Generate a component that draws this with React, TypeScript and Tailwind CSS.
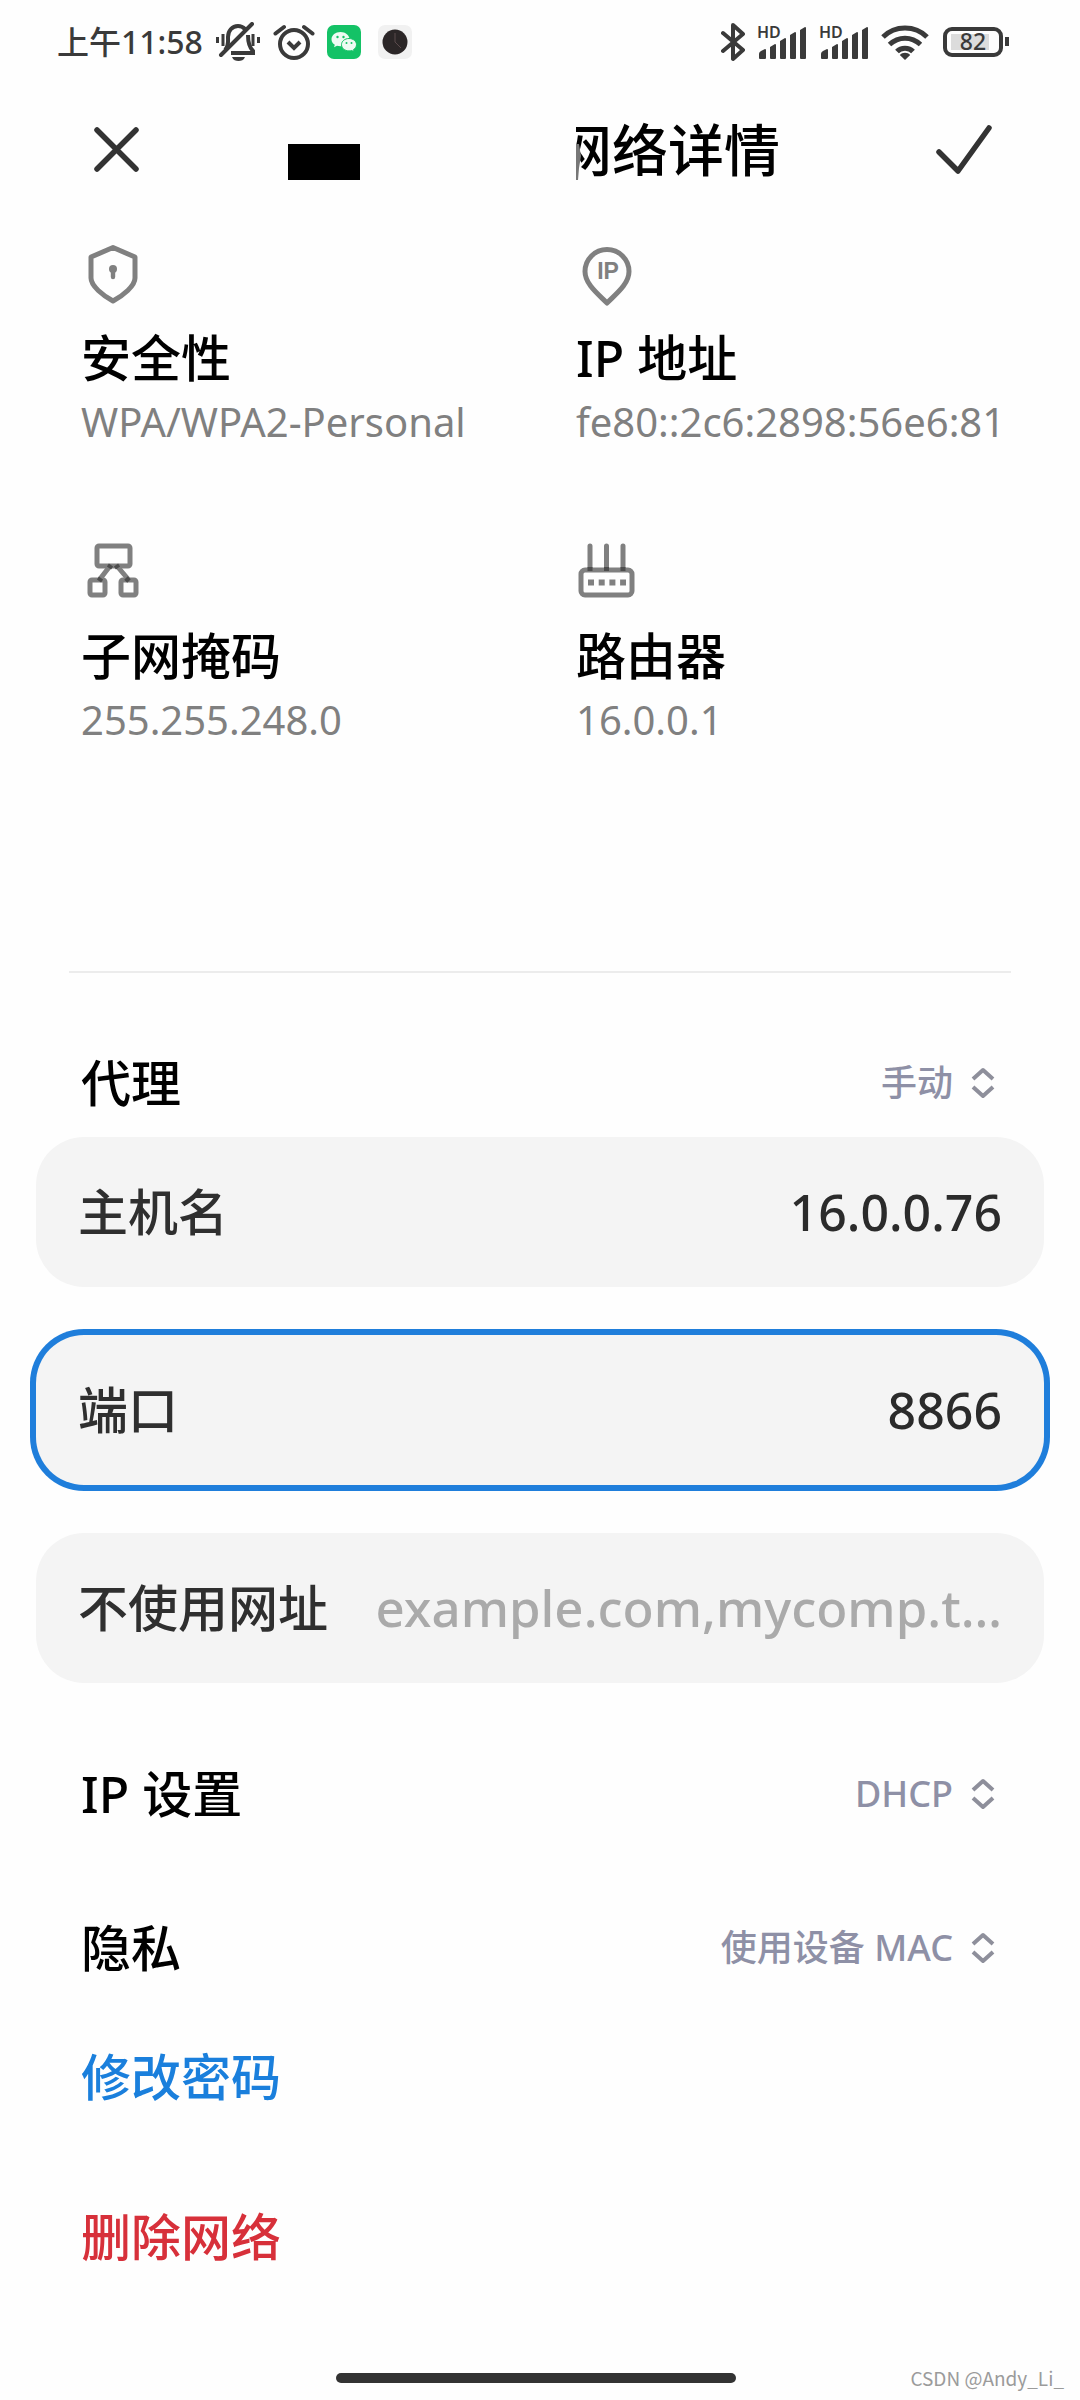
import type { ReactNode } from 'react';

function BellOff() {
  return (
    <svg width="46" height="40" viewBox="0 0 46 40" fill="none" stroke="#3a3a3a" strokeWidth="4">
      <path d="M10 28c4-4 3-8 3-13 0-6 4-11 10-11 3 0 5 1 7 3" />
      <path d="M33 13c0 8 1 12 5 16v2H16" />
      <path d="M37 2 6 33" strokeLinecap="round" />
      <path d="M17 35h13c-1 3-4 4-6.500 4S18 38 17 35z" fill="#3a3a3a" stroke="none" />
      <path d="M8 12v12M38 12v12" strokeWidth="3" />
      <path d="M2.500 15v6M43.500 15v6" strokeWidth="3" />
    </svg>
  );
}

function Alarm() {
  return (
    <svg width="42" height="40" viewBox="0 0 42 40" fill="none" stroke="#3a3a3a" strokeWidth="4">
      <circle cx="21" cy="22" r="14" />
      <path d="M2.500 11.500 11 5M39.500 11.500 31 5" strokeLinecap="round" />
      <path d="m15 20 6 6 6-6" />
    </svg>
  );
}

function WeChat() {
  return (
    <svg width="34" height="34" viewBox="0 0 34 34">
      <rect width="34" height="34" rx="7" fill="#14c266" />
      <path d="M13.500 7C8.500 7 4.500 10.200 4.500 14.200c0 2.300 1.300 4.200 3.300 5.500l-.8 2.600 3-1.500c1.100.3 2.300.5 3.500.5 5 0 9-3.200 9-7.100S18.500 7 13.500 7z" fill="#eefbf3" />
      <path d="M22 13.500c-4.200 0-7.500 2.700-7.500 6.200s3.300 6.200 7.500 6.200c1 0 1.900-.1 2.700-.4l2.500 1.300-.7-2.200c1.800-1.200 3-2.900 3-4.900 0-3.500-3.300-6.200-7.500-6.200z" fill="#eefbf3" stroke="#14c266" />
      <g fill="#14c266">
        <circle cx="10.500" cy="12" r="1.200" />
        <circle cx="16.500" cy="12" r="1.200" />
        <circle cx="19.500" cy="18" r="1" />
        <circle cx="24.500" cy="18" r="1" />
      </g>
    </svg>
  );
}

function ClockApp() {
  return (
    <svg width="40" height="34" viewBox="0 0 40 34">
      <rect x="5" width="34" height="34" rx="7" fill="#f1f1f1" />
      <circle cx="22" cy="17" r="12.500" fill="#2b2627" />
      <path d="M22 8v9l6 6" fill="none" stroke="#5b4a4c" />
    </svg>
  );
}

function Bluetooth() {
  return (
    <svg width="24" height="40" viewBox="1 0 24 40" fill="none" stroke="#3a3a3a" strokeWidth="4" strokeLinejoin="round" strokeLinecap="round">
      <path d="m3 11 20 17-10 9V3l10 9L3 29" />
    </svg>
  );
}

function Signal() {
  return (
    <svg width="50" height="50" viewBox="0 -8 50 50" fill="#3a3a3a">
      <text x="0" y="13" fontSize="16" fontWeight="600" fontFamily="Noto Sans, sans-serif">HD</text>
      <path d="M2 33v-4q0-2 2-3l4-2q1 0 1 1v8q0 1-1 1H3q-1 0-1-1zM13 33V22l5-3q1 0 1 1v13q0 1-1 1h-4q-1 0-1-1zM23 33V16l5-3q1 0 1 1v19q0 1-1 1h-4q-1 0-1-1zM33 33V10l5-3q1 0 1 1v25q0 1-1 1h-4q-1 0-1-1zM43 33V5l5-3q1 0 1 1v30q0 1-1 1h-4q-1 0-1-1z" />
    </svg>
  );
}

function Wifi() {
  return (
    <svg width="50" height="36" viewBox="0 0 50 36" fill="none" stroke="#3a3a3a" strokeWidth="5">
      <path d="M2 13C14 1 34 1 46 13" />
      <path d="M8.500 20.500c9-8.500 22-8.500 31 0" />
      <path d="M16 27.500c4-4.500 12-4.500 16 0" />
      <path d="M24 36 18.800 31c2.500-3 7.900-3 10.400 0z" fill="#3a3a3a" stroke="none" />
    </svg>
  );
}

function Battery() {
  return (
    <svg width="68" height="32" viewBox="0 0 68 32">
      <rect x="8" y="8" width="38" height="16" fill="#dcdcdc" />
      <rect x="2" y="3" width="56" height="26" rx="7" fill="none" stroke="#3a3a3a" strokeWidth="4" />
      <path d="M64 11v9" stroke="#3a3a3a" strokeWidth="4" />
      <text x="30" y="24" textAnchor="middle" fontSize="23" fontWeight="500" fill="#3a3a3a" fontFamily="Noto Sans, sans-serif">82</text>
    </svg>
  );
}

function Shield() {
  return (
    <svg width="64" height="64" viewBox="0 0 64 64" fill="none" stroke="#808080" strokeWidth="5" strokeLinejoin="round">
      <path d="M32 5.500 54 15v21c0 8-12 17.500-22 23C22 53.500 10 44 10 36V15z" />
      <circle cx="32" cy="27" r="4" fill="#808080" stroke="none" />
      <path d="M32 28v7" strokeLinecap="round" strokeWidth="4.400" />
    </svg>
  );
}

function IpPin() {
  return (
    <svg width="64" height="64" viewBox="0 0 64 64" fill="none">
      <path d="M31 61C22 52 9 42 9 29.500a22 22 0 0 1 44 0C53 42 40 52 31 61z" stroke="#808080" strokeWidth="5" strokeLinejoin="round" />
      <text x="32" y="37" textAnchor="middle" fontSize="23" fontWeight="600" fill="#808080" fontFamily="Liberation Sans, sans-serif">IP</text>
    </svg>
  );
}

function Subnet() {
  return (
    <svg width="64" height="64" viewBox="0 0 64 64" fill="none" stroke="#808080" strokeWidth="5">
      <rect x="16" y="6" width="33" height="20" rx="2" />
      <rect x="9" y="40" width="15" height="15" rx="2" />
      <rect x="40" y="40" width="15" height="15" rx="2" />
      <path d="m29 26-10 13M36 26l11 13" />
      <path d="m30 25-2 3M35 25l2 3M20 38l-2 3M45 38l3 3" stroke="#4d4d4d" />
    </svg>
  );
}

function Router() {
  return (
    <svg width="64" height="64" viewBox="0 0 64 64" fill="none" stroke="#808080" strokeWidth="5">
      <rect x="5" y="30" width="51" height="25" rx="4" />
      <path d="M14 6v22M30.500 6v22M47 6v22" strokeLinecap="round" />
      <path d="M14 27v4M30.500 27v4M47 27v4" stroke="#4d4d4d" />
      <path d="M12 42.500h38" strokeWidth="6" strokeDasharray="6 4.700" />
    </svg>
  );
}

function UpDown() {
  return (
    <svg width="24" height="32" viewBox="0 0 24 32" fill="none" stroke="#8e8f9b" strokeWidth="4" className="pointer-events-none shrink-0">
      <path d="m2 12 10-9 10 9M2 20l10 9 10-9" strokeLinejoin="round" />
    </svg>
  );
}

function Info({ icon, title, value }: { icon: ReactNode; title: string; value: string }) {
  return (
    <div>
      {icon}
      <h2 className="mt-6 text-[50px] leading-[56px] font-medium text-black">{title}</h2>
      <p className="mt-3 text-[40px] leading-[48px] whitespace-nowrap text-[#808080]">{value}</p>
    </div>
  );
}

function Field({ id, label, value, placeholder, active }: { id: string; label: string; value?: string; placeholder?: string; active?: boolean }) {
  return (
    <div className={`flex h-[150px] items-center gap-10 rounded-[48px] bg-[#f4f4f4] px-[42px] ${active ? 'ring-[6px] ring-[#1f7edb]' : ''}`}>
      <label htmlFor={id} className="shrink-0 text-[50px] leading-[56px] font-medium text-[#2f2f2f]">{label}</label>
      <input
        id={id}
        defaultValue={value}
        placeholder={placeholder}
        className="h-20 min-w-0 flex-1 text-right text-[50px] font-medium text-[#2b2b2b] outline-none placeholder:text-[51px] placeholder:text-[#aaaaaa]"
      />
    </div>
  );
}

function PickRow({ id, label, value, className }: { id: string; label: string; value: string; className: string }) {
  return (
    <div className={`flex items-center justify-between pr-[85px] pl-[81px] ${className}`}>
      <label htmlFor={id} className="text-[50px] leading-[56px] font-medium text-black">{label}</label>
      <div className="flex items-center gap-[18px]">
        <select id={id} className="appearance-none text-right text-[36px] leading-[48px] font-medium text-[#8e90a6] outline-none">
          <option>{value}</option>
        </select>
        <UpDown />
      </div>
    </div>
  );
}

export default function App() {
  return (
    <div className="flex min-h-screen flex-col bg-[#fefefe] font-['Noto_Sans','Noto_Sans_CJK_SC',sans-serif]">
      <div className="flex h-[84px] items-center justify-between pr-[69px] pl-[57px] text-[#3a3a3a]">
        <div className="flex items-center gap-3">
          <span className="text-[32px] leading-[48px] font-medium">上午11:58</span>
          <BellOff />
          <Alarm />
          <WeChat />
          <ClockApp />
        </div>
        <div className="flex items-center gap-3">
          <Bluetooth />
          <Signal />
          <Signal />
          <Wifi />
          <Battery />
        </div>
      </div>

      <header className="flex h-[130px] items-center justify-between px-[84px]">
        <button aria-label="关闭" className="flex h-16 w-16 items-center justify-center">
          <svg width="48" height="48" viewBox="0 0 48 48" stroke="#333" strokeWidth="5.500" strokeLinecap="round">
            <path d="m5 5 39 39M44 5 5 44" />
          </svg>
        </button>
        <div className="relative flex w-[504px] justify-end pr-3">
          <h1 className="text-[56px] leading-[72px] font-medium whitespace-nowrap text-black">网络详情</h1>
          {/* blacked-out network name, the patch eats into the first glyph */}
          <div className="absolute inset-y-0 left-0 flex w-[288px] items-center bg-[#fefefe] pt-[26px]">
            <span className="h-9 w-[72px] bg-black" />
            <svg width="6" height="36" viewBox="0 0 6 36" fill="#777" className="absolute left-full">
              <path d="M0 0h3l2 12-2 12-1 12H0z" />
            </svg>
          </div>
        </div>
        <button aria-label="确定" className="flex h-16 w-16 items-center justify-center">
          <svg width="60" height="50" viewBox="0 0 60 50" fill="none" stroke="#333" strokeWidth="5.500" strokeLinecap="round" strokeLinejoin="round">
            <path d="m5 28 19 19L55 4" />
          </svg>
        </button>
      </header>

      <section className="grid grid-cols-[495px_1fr] gap-y-[94px] pt-7 pl-[81px]">
        <Info icon={<Shield />} title="安全性" value="WPA/WPA2-Personal" />
        <Info icon={<IpPin />} title="IP 地址" value="fe80::2c6:2898:56e6:81" />
        <Info icon={<Subnet />} title="子网掩码" value="255.255.248.0" />
        <Info icon={<Router />} title="路由器" value="16.0.0.1" />
      </section>

      <hr className="mx-[69px] mt-[227px] border-t-2 border-[#ececec]" />

      <PickRow id="proxy" label="代理" value="手动" className="mt-[66px] h-[88px]" />
      <div className="mt-[10px] flex flex-col gap-12 px-9">
        <Field id="host" label="主机名" value="16.0.0.76" />
        <Field id="port" label="端口" value="8866" active />
        <Field id="bypass" label="不使用网址" placeholder="example.com,mycomp.t…" />
      </div>
      <PickRow id="ip" label="IP 设置" value="DHCP" className="mt-[34px] h-[154px]" />
      <PickRow id="privacy" label="隐私" value="使用设备 MAC" className="h-[154px]" />

      <div className="flex flex-col items-start gap-14 pl-[81px] text-[50px] leading-[56px] font-medium">
        <button className="h-[104px] text-[#1a7fdc]">修改密码</button>
        <button className="h-[104px] text-[#d7303a]">删除网络</button>
      </div>

      <footer className="mt-auto grid h-11 grid-cols-[1fr_400px_1fr] items-center pr-2">
        <span className="col-start-2 h-[10px] rounded-full bg-[#333333]" />
        <span className="pr-2 text-right font-['Noto_Sans_CJK_SC',sans-serif] text-[19px] leading-8 text-[#9b9b9b]">CSDN @Andy_Li_</span>
      </footer>
    </div>
  );
}
